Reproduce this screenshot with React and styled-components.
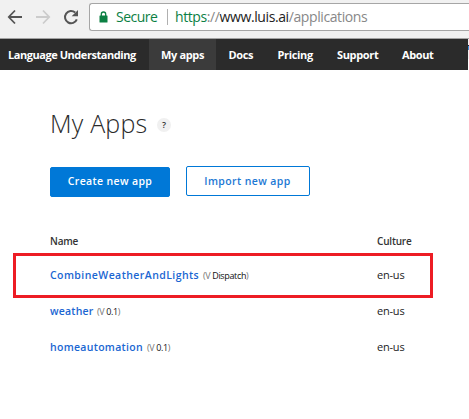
import React from "react";
import styled, { createGlobalStyle } from "styled-components";

const GlobalStyle = createGlobalStyle`
  * { box-sizing: border-box; }
  body { margin: 0; background: #fff; font-family: "Open Sans", "Noto Sans", sans-serif; }
`;

const Page = styled.div`
  width: 469px;
  height: 419px;
  overflow: hidden;
  background: #fff;
`;

const BrowserBar = styled.header`
  display: flex;
  height: 39px;
  padding-top: 3px;
  background: #f1f1f1;
  border-bottom: 1px solid #a3a3a3;
`;

const Controls = styled.div`
  display: flex;
  width: 89px;
  flex: none;
  svg { display: block; }
`;

const AddressBar = styled.div`
  display: flex;
  align-items: center;
  flex: 1;
  height: 28px;
  padding-left: 9px;
  border: 1px solid #a6a6a6;
  border-right: 0;
  border-radius: 3px 0 0 3px;
  background: #fff;
  font-size: 14px;
  line-height: 26px;
  white-space: nowrap;
`;

const Secure = styled.span`
  width: 51px;
  margin-left: 8px;
  color: #0b8043;
  letter-spacing: -0.5px;
`;

const Divider = styled.span`
  width: 1px;
  height: 16px;
  margin-right: 7px;
  background: #b0b0b0;
`;

const Url = styled.span`
  color: #222;
  letter-spacing: -0.4px;
`;
const Scheme = styled.span`color: #0b8043;`;
const Muted = styled.span`color: #888;`;

const NavStrip = styled.div`
  display: flex;
  height: 31px;
`;

const Nav = styled.nav`
  display: flex;
  flex: 1;
  background: #2b2b2b;
`;

const PageEdge = styled.div`
  width: 1px;
  background: linear-gradient(#f1f1f1 6px, #1b2433 6px 7px, #3c8fdc 7px 11px, #f1f1f1 11px 20px, #fff 20px);
`;

const NavItem = styled.a`
  flex: none;
  width: ${(p) => p.$width}px;
  padding-left: ${(p) => p.$pad || 12}px;
  background: ${(p) => (p.$active ? "#3b3b3b" : "transparent")};
  color: #fff;
  font-size: 11px;
  font-weight: 700;
  line-height: 32px;
  letter-spacing: ${(p) => p.$track}px;
  white-space: nowrap;
`;

const Main = styled.main`
  padding: 34px 0 0 50px;
`;

const TitleRow = styled.div`
  display: flex;
  align-items: center;
  height: 40px;
`;

const Title = styled.h1`
  width: 107px;
  margin: -3px 0 0;
  color: #2a2a2a;
  font-size: 25px;
  font-weight: 300;
  line-height: 40px;
  letter-spacing: 0.2px;
  white-space: nowrap;
`;

const Help = styled.span`
  width: 14px;
  height: 14px;
  margin-top: 2px;
  border-radius: 50%;
  background: #f0f0f0;
  color: #333;
  font-size: 9px;
  font-weight: 600;
  line-height: 14px;
  text-align: center;
`;

const Actions = styled.div`
  display: flex;
  gap: 16px;
  margin-top: 22px;
`;

const Button = styled.button`
  width: ${(p) => (p.$primary ? 120 : 124)}px;
  height: 30px;
  margin-top: ${(p) => (p.$primary ? 1 : 0)}px;
  padding: 0 ${(p) => (p.$primary ? "0 2px" : "1px 0 0")};
  border: 1px solid #0078d7;
  border-radius: 2px;
  background: ${(p) => (p.$primary ? "#0078d7" : "#fff")};
  color: ${(p) => (p.$primary ? "#fff" : "#1c78d4")};
  font: 600 10.5px/26px "Open Sans", sans-serif;
  letter-spacing: ${(p) => p.$track}px;
  white-space: nowrap;
`;

const TableHead = styled.div`
  display: grid;
  grid-template-columns: 327px 1fr;
  height: 20px;
  margin-top: 34px;
  color: #333;
  font-size: 10px;
  font-weight: 600;
  line-height: 20px;
  letter-spacing: -0.2px;
`;

const Row = styled.div`
  display: grid;
  grid-template-columns: 327px 1fr;
  align-items: center;
  width: ${(p) => (p.$marked ? 420 : 383)}px;
  height: ${(p) => (p.$marked ? 45 : 36)}px;
  margin: ${(p) => (p.$marked ? "2px 0 -5px -37px" : "0")};
  padding: ${(p) => (p.$marked ? "0 0 2px 34px" : "0")};
  border: ${(p) => (p.$marked ? "3px solid #ed1c24" : "0")};
`;

const AppCell = styled.div`
  display: flex;
  align-items: baseline;
  white-space: nowrap;
`;

const AppLink = styled.a`
  width: ${(p) => p.$width}px;
  color: #1a66d2;
  font-size: 10.5px;
  font-weight: 600;
  line-height: 20px;
  letter-spacing: ${(p) => p.$track}px;
`;

const Version = styled.span`
  color: #777;
  font-size: 9px;
  letter-spacing: ${(p) => p.$track}px;
  b { color: #111; font-weight: 400; }
`;

const Culture = styled.div`
  color: #222;
  font-size: 11px;
  line-height: 20px;
  letter-spacing: -0.2px;
`;

const NAV = [
  { label: "Language Understanding", width: 149, pad: 8, track: -0.45 },
  { label: "My apps", width: 67, active: true, track: -0.35 },
  { label: "Docs", width: 49, pad: 12.5, track: -0.35 },
  { label: "Pricing", width: 60, pad: 12.5, track: -0.35 },
  { label: "Support", width: 65, track: -0.35 },
  { label: "About", width: 60, track: -0.4 },
];

const APPS = [
  { name: "CombineWeatherAndLights", version: "Dispatch", width: 153, track: 0.43, vtrack: -0.36, marked: true },
  { name: "weather", version: "0.1", width: 47, track: 0.2, vtrack: -0.4 },
  { name: "homeautomation", version: "0.1", width: 97, track: 0.3, vtrack: -0.4 },
];

export default function App() {
  return (
    <Page>
      <GlobalStyle />
      <BrowserBar>
        <Controls>
          <svg width="89" height="28" viewBox="0 3 89 28" fill="none" strokeWidth="1.8">
            <path d="M22 17H9M15 10.5 8.8 17l6.2 6.5" stroke="#555" />
            <path d="M36 17h13M43 10.5l6.2 6.5-6.2 6.5" stroke="#ccc" />
            <path d="M76.8 19.3A6.1 6.1 0 1 1 75.2 12.6" stroke="#555" strokeWidth="2" />
            <path d="M78 10v6.3h-6.3z" fill="#555" />
          </svg>
        </Controls>
        <AddressBar>
          <svg width="9" height="12" viewBox="0 0 9 12">
            <path d="M2.3 5V3.2a2.2 2.2 0 0 1 4.4 0V5" fill="none" stroke="#0b8043" strokeWidth="1.3" />
            <rect x="0.5" y="4.5" width="8" height="7" rx="0.5" fill="#0b8043" />
          </svg>
          <Secure>Secure</Secure>
          <Divider />
          <Url><Scheme>https</Scheme><Muted>://</Muted>www.luis.ai<Muted>/applications</Muted></Url>
        </AddressBar>
      </BrowserBar>
      <NavStrip>
        <Nav>
          {NAV.map((n) => (
            <NavItem key={n.label} $width={n.width} $pad={n.pad} $active={n.active} $track={n.track}>{n.label}</NavItem>
          ))}
        </Nav>
        <PageEdge />
      </NavStrip>
      <Main>
        <TitleRow>
          <Title>My Apps</Title>
          <Help>?</Help>
        </TitleRow>
        <Actions>
          <Button $primary $track={0.35}>Create new app</Button>
          <Button $track={0.4}>Import new app</Button>
        </Actions>
        <TableHead><span>Name</span><span>Culture</span></TableHead>
        {APPS.map((a) => (
          <Row key={a.name} $marked={a.marked}>
            <AppCell>
              <AppLink $width={a.width} $track={a.track}>{a.name}</AppLink>
              <Version $track={a.vtrack}>(V <b>{a.version}</b>)</Version>
            </AppCell>
            <Culture>en-us</Culture>
          </Row>
        ))}
      </Main>
    </Page>
  );
}
